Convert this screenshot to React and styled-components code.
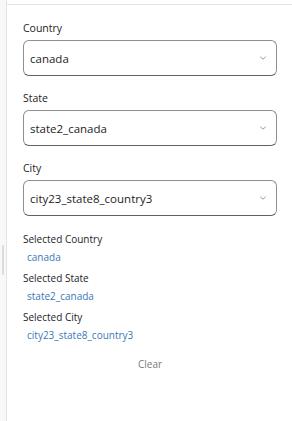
import styled, { createGlobalStyle } from "styled-components";

const GlobalStyle = createGlobalStyle`
  html, body {
    margin: 0;
    padding: 0;
    background: #ffffff;
    font-family: "Open Sans", "Noto Sans", sans-serif;
  }
`;

const Chevron = () => (
  <svg width="10" height="10" viewBox="0 0 10 10" fill="none">
    <path d="M2.6 4 L5 6.2 L7.4 4" stroke="#9a9a9a" strokeWidth="1" strokeLinecap="round" strokeLinejoin="round" />
  </svg>
);

const fields = [
  { label: "Country", value: "canada" },
  { label: "State", value: "state2_canada" },
  { label: "City", value: "city23_state8_country3" },
];

const selected = [
  { label: "Selected Country", value: "canada" },
  { label: "Selected State", value: "state2_canada" },
  { label: "Selected City", value: "city23_state8_country3" },
];

export default function App() {
  return (
    <>
      <GlobalStyle />
      <Page>
        <Rail>
          <Handle />
        </Rail>
        <Panel>
          <TopBar />
          <Content>
            {fields.map((f) => (
              <Field key={f.label}>
                <Label>{f.label}</Label>
                <Dropdown>
                  <span>{f.value}</span>
                  <Chevron />
                </Dropdown>
              </Field>
            ))}
            <Summary>
              {selected.map((s) => (
                <SummaryItem key={s.label}>
                  <SummaryLabel>{s.label}</SummaryLabel>
                  <SummaryValue>{s.value}</SummaryValue>
                </SummaryItem>
              ))}
            </Summary>
            <ClearButton>Clear</ClearButton>
          </Content>
        </Panel>
      </Page>
    </>
  );
}

const Page = styled.div`
  display: flex;
  width: 292px;
  height: 421px;
  overflow: hidden;
`;

const Rail = styled.div`
  width: 6px;
  flex-shrink: 0;
  background: #f8f8f9;
  border-right: 1px solid #e3e3e3;
  position: relative;
`;

const Handle = styled.div`
  position: absolute;
  left: 2px;
  top: 245px;
  width: 2px;
  height: 30px;
  border-radius: 1px;
  background: #dcdcdc;
`;

const Panel = styled.div`
  flex: 1;
  display: flex;
  flex-direction: column;
`;

const TopBar = styled.div`
  height: 4px;
  border-bottom: 1px solid #e3e3e3;
`;

const Content = styled.div`
  display: flex;
  flex-direction: column;
  padding: 15px 15px 0 16px;
`;

const Field = styled.div`
  display: flex;
  flex-direction: column;
  margin-bottom: 14px;
`;

const Label = styled.div`
  font-size: 10.5px;
  line-height: 16px;
  color: #242424;
  margin-bottom: 4px;
`;

const Dropdown = styled.div`
  height: 36px;
  box-sizing: border-box;
  display: flex;
  align-items: center;
  justify-content: space-between;
  padding: 0 8px 0 6px;
  border: 1px solid #8f8f8f;
  border-bottom-color: #616161;
  border-radius: 6px;
  font-size: 11.5px;
  color: #242424;
`;

const Summary = styled.div`
  display: flex;
  flex-direction: column;
  gap: 3px;
`;

const SummaryItem = styled.div`
  display: flex;
  flex-direction: column;
`;

const SummaryLabel = styled.div`
  font-size: 10px;
  line-height: 18px;
  color: #242424;
`;

const SummaryValue = styled.div`
  font-size: 10px;
  line-height: 18px;
  color: #3a78b8;
  padding-left: 4px;
`;

const ClearButton = styled.div`
  align-self: center;
  margin-top: 11px;
  font-size: 10px;
  line-height: 18px;
  color: #7a7a7a;
`;
